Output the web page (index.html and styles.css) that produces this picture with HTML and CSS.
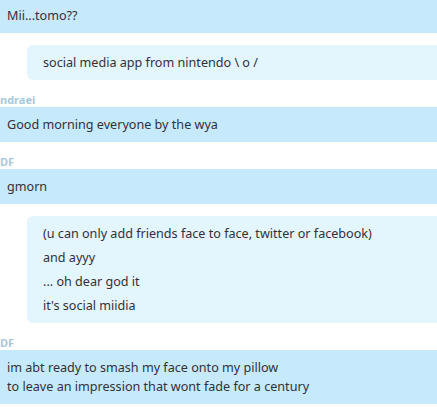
FILE: index.html
```html
<!DOCTYPE html>
<html lang="en">
<head>
    <meta charset="UTF-8">
    <meta name="viewport" content="width=device-width, initial-scale=1.0">
    <title>Chat</title>
    <link rel="stylesheet" href="styles.css">
</head>
<body>
    <div class="chat">
        <div class="group first">
            <div class="bubble">Mii...tomo??</div>
        </div>
        <div class="group own">
            <div class="bubble">
                <p>social media app from nintendo \ o /</p>
            </div>
        </div>

        <div class="name">ndraei</div>
        <div class="group">
            <div class="bubble">Good morning everyone by the wya</div>
        </div>

        <div class="name">DF</div>
        <div class="group">
            <div class="bubble">gmorn</div>
        </div>
        <div class="group own">
            <div class="bubble">
                <p>(u can only add friends face to face, twitter or facebook)</p>
                <p>and ayyy</p>
                <p>... oh dear god it</p>
                <p>it's social miidia</p>
            </div>
        </div>

        <div class="name">DF</div>
        <div class="group">
            <div class="bubble">im abt ready to smash my face onto my pillow<br>to leave an impression that wont fade for a century</div>
        </div>
    </div>
</body>
</html>
```

FILE: styles.css
```css
:root {
    --bubble-color: #c6eafb;
    --own-bubble-color: #e3f5fd;
    --text-color: #333038;
    --name-color: #a7c9dc;
}

body {
    margin: 0;
    background: #fff;
    font-family: "Noto Sans", "Open Sans", sans-serif;
    font-size: 12.6px;
    color: var(--text-color);
    overflow: hidden;
}

.group + .group {
    margin-top: 12px;
}

.bubble {
    background-color: var(--bubble-color);
    padding: 8px 16px 8px 7px;
    line-height: 19px;
}

.first .bubble {
    padding-top: 6px;
}

.own .bubble {
    margin-left: 27px;
    padding-left: 16px;
    background-color: var(--own-bubble-color);
    border-radius: 6px 0 0 6px;
}

.bubble p {
    margin: 0;
}

.bubble p + p {
    margin-top: 5px;
}

.name {
    margin-top: 12px;
    height: 15px;
    line-height: 15px;
    font-size: 11px;
    font-weight: bold;
    color: var(--name-color);
}
```
